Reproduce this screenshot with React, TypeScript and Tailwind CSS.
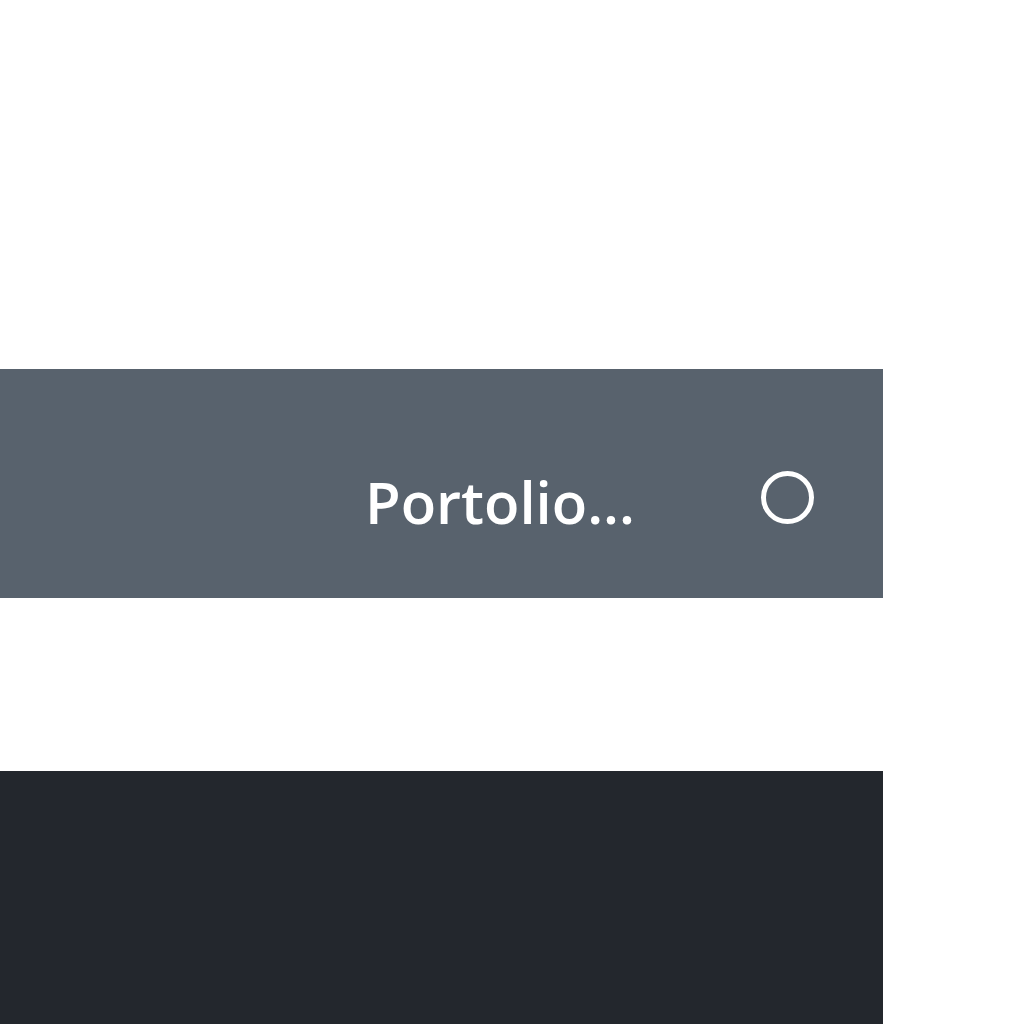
export default function App() {
  return (
    <div className="w-[1024px] h-[1024px] bg-white flex flex-col overflow-hidden" style={{ fontFamily: '"Open Sans", "Noto Sans", sans-serif' }}>
      <div className="h-[369px] shrink-0" />
      <div className="w-[883px] h-[229px] shrink-0 bg-[#58626d] flex items-start pt-[104px] pl-[365px]">
        <span className="text-[58px] leading-none text-white font-semibold">Portolio...</span>
        <div className="ml-[126px] -mt-[2px] w-[53px] h-[53px] rounded-full border-[5px] border-white" />
      </div>
      <div className="h-[173px] shrink-0" />
      <div className="w-[883px] flex-1 bg-[#23272d]" />
    </div>
  )
}
